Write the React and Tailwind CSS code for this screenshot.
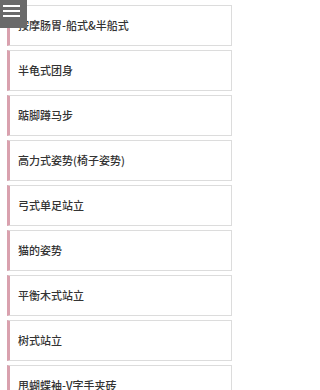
const items = [
  '按摩肠胃-船式&半船式',
  '半龟式团身',
  '踮脚蹲马步',
  '高力式姿势(椅子姿势)',
  '弓式单足站立',
  '猫的姿势',
  '平衡木式站立',
  '树式站立',
  '甩蝴蝶袖-V字手夹砖',
]

function App() {
  return (
    <div
      className="relative h-[390px] w-[235px] overflow-hidden bg-white"
      style={{ fontFamily: '"Noto Sans CJK SC", "Noto Sans", sans-serif' }}
    >
      <div className="flex flex-col gap-[4px] pl-[7px] pr-[3px] pt-[5px]">
        {items.map((item) => (
          <div
            key={item}
            className="flex h-[41px] shrink-0 items-center border border-l-[3px] border-[#dcdcdc] border-l-[#d9a1ae] bg-white pl-[8px] text-[11px] font-medium text-[#333]"
          >
            {item}
          </div>
        ))}
      </div>
      <button className="absolute left-0 top-0 flex h-[28px] w-[27px] flex-col gap-[3px] bg-[#6a6a6a] pl-[3px] pt-[5px]">
        <span className="block h-[2px] w-[17px] bg-white" />
        <span className="block h-[2px] w-[17px] bg-white" />
        <span className="block h-[2px] w-[17px] bg-white" />
      </button>
    </div>
  )
}

export default App
